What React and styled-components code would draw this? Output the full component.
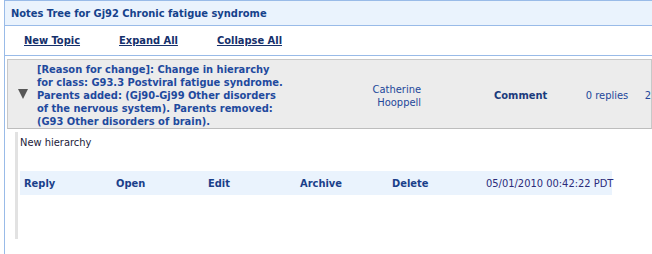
import React from 'react';
import styled, { createGlobalStyle } from 'styled-components';

const GlobalStyle = createGlobalStyle`
  html, body {
    margin: 0;
    padding: 0;
    background: #ffffff;
    overflow: hidden;
  }
  body {
    font-family: "DejaVu Sans Condensed", "DejaVu Sans", sans-serif;
    font-size: 11px;
  }
`;

const Panel = styled.div`
  margin-left: 4px;
  width: 648px;
  height: 254px;
  border-left: 1px solid #99bbe8;
  border-top: 1px solid #99bbe8;
  box-sizing: border-box;
  overflow: hidden;
`;

const Header = styled.div`
  height: 24px;
  display: flex;
  align-items: center;
  padding-left: 6px;
  background: #eaf3fd;
  border-bottom: 1px solid #99bbe8;
  color: #15428b;
  font-weight: bold;
  font-size: 11px;
`;

const Toolbar = styled.div`
  height: 29px;
  display: flex;
  align-items: center;
  gap: 39px;
  padding-left: 19px;
  border-bottom: 1px solid #99bbe8;
`;

const ToolLink = styled.a`
  color: #15306b;
  font-weight: bold;
  text-decoration: underline;
  cursor: pointer;
`;

const Topic = styled.div`
  margin: 3px 0 0 2px;
  height: 70px;
  padding-top: 3px;
  display: flex;
  align-items: center;
  background: #ececec;
  border: 1px solid #c8c8c8;
  border-bottom-color: #bdbdbd;
  box-sizing: border-box;
  white-space: nowrap;
`;

const Toggle = styled.div`
  width: 28px;
  display: flex;
  justify-content: center;
  padding-left: 1px;
  margin-top: -3px;

  &::before {
    content: '';
    border-left: 5px solid transparent;
    border-right: 5px solid transparent;
    border-top: 10px solid #575757;
  }
`;

const Subject = styled.div`
  width: 259px;
  color: #1f4a9e;
  font-weight: bold;
  line-height: 13px;
`;

const Author = styled.div`
  width: 126px;
  text-align: right;
  color: #23479a;
  line-height: 13px;
`;

const Kind = styled.div`
  width: 72px;
  margin-left: 73px;
  color: #1a3b7c;
  font-weight: bold;
`;

const Replies = styled.div`
  width: 59px;
  margin-left: 20px;
  color: #23479a;
`;

const Date = styled.div`
  color: #23479a;
`;

const Body = styled.div`
  margin: 3px 0 0 10px;
  height: 107px;
  border-left: 3px solid #e2e2e2;
  padding-left: 2px;
  box-sizing: border-box;
`;

const Note = styled.div`
  height: 39px;
  padding-top: 4px;
  box-sizing: border-box;
  color: #1b1b3a;
`;

const Actions = styled.div`
  width: 592px;
  height: 24px;
  display: flex;
  align-items: center;
  background: #eaf3fd;
  padding-left: 4px;
  box-sizing: border-box;
  white-space: nowrap;
`;

const Action = styled.span`
  flex: none;
  width: ${p => p.$w || 92}px;
  color: #1a3f8a;
  font-weight: bold;
  cursor: pointer;
`;

const Stamp = styled.span`
  color: #2c2c7a;
`;

export default function App() {
  return (
    <>
      <GlobalStyle />
      <Panel>
        <Header>Notes Tree for Gj92 Chronic fatigue syndrome</Header>
        <Toolbar>
          <ToolLink>New Topic</ToolLink>
          <ToolLink>Expand All</ToolLink>
          <ToolLink>Collapse All</ToolLink>
        </Toolbar>
        <Topic>
          <Toggle />
          <Subject>
            [Reason for change]: Change in hierarchy
            <br />
            for class: G93.3 Postviral fatigue syndrome.
            <br />
            Parents added: (Gj90-Gj99 Other disorders
            <br />
            of the nervous system). Parents removed:
            <br />
            (G93 Other disorders of brain).
          </Subject>
          <Author>
            Catherine
            <br />
            Hooppell
          </Author>
          <Kind>Comment</Kind>
          <Replies>0 replies</Replies>
          <Date>2</Date>
        </Topic>
        <Body>
          <Note>New hierarchy</Note>
          <Actions>
            <Action>Reply</Action>
            <Action>Open</Action>
            <Action>Edit</Action>
            <Action>Archive</Action>
            <Action $w={94}>Delete</Action>
            <Stamp>05/01/2010 00:42:22 PDT</Stamp>
          </Actions>
        </Body>
      </Panel>
    </>
  );
}
